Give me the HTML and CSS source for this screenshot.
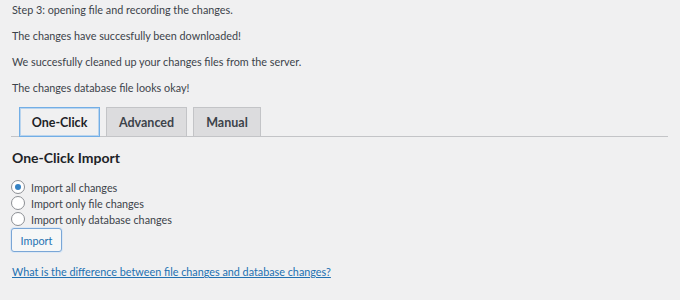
FILE: index.html
```html
<!DOCTYPE html>
<html lang="en">
<head>
    <meta charset="UTF-8">
    <title>Import changes</title>
    <link rel="stylesheet" href="styles.css">
</head>
<body>

<div class="wrap">
    <p>Step 3: opening file and recording the changes.</p>
    <p>The changes have succesfully been downloaded!</p>
    <p>We succesfully cleaned up your changes files from the server.</p>
    <p>The changes database file looks okay!</p>

    <div class="nav-tab-wrapper">
        <a class="nav-tab nav-tab-active" href="#">One-Click</a>
        <a class="nav-tab" href="#">Advanced</a>
        <a class="nav-tab" href="#">Manual</a>
    </div>

    <h2>One-Click Import</h2>

    <form class="import-form">
        <label class="radio-row"><input type="radio" name="mode" checked> Import all changes</label>
        <label class="radio-row"><input type="radio" name="mode"> Import only file changes</label>
        <label class="radio-row"><input type="radio" name="mode"> Import only database changes</label>
        <button type="button" class="button">Import</button>
    </form>

    <a class="help-link" href="#">What is the difference between file changes and database changes?</a>
</div>

</body>
</html>
```

FILE: styles.css
```css
body {
    margin: 0;
    background: #f0f0f1;
    color: #3c434a;
    font-family: Lato, "Liberation Sans", sans-serif;
    font-size: 10.8px;
}

.wrap {
    padding: 1px 12px 0 11px;
}

p {
    margin: 0 0 8px 1px;
    line-height: 18px;
}

.nav-tab-wrapper {
    display: flex;
    gap: 6px;
    margin-top: 10px;
    padding-left: 8px;
    border-bottom: 1px solid #c3c4c7;
    height: 29px;
}

.nav-tab {
    display: flex;
    align-items: center;
    justify-content: center;
    height: 29px;
    box-sizing: border-box;
    padding: 0 4px;
    background: #dcdcde;
    border: 1px solid #c3c4c7;
    border-bottom: none;
    color: #3c434a;
    font-size: 12.5px;
    font-weight: 700;
    white-space: nowrap;
    text-decoration: none;
}

.nav-tab:nth-child(1),
.nav-tab:nth-child(2) {
    width: 81px;
}

.nav-tab:nth-child(3) {
    width: 68px;
}

.nav-tab-active {
    background: #f0f0f1;
    height: 30px;
    border: 1px solid #72aee6;
    box-shadow: inset 0 0 0 1px #b9d4ee;
    color: #1d2327;
}

h2 {
    margin: 10px 0 10px 1px;
    font-size: 14px;
    font-weight: 700;
    line-height: 22px;
    color: #1d2327;
}

.import-form {
    display: flex;
    flex-direction: column;
    align-items: flex-start;
}

.radio-row {
    display: flex;
    align-items: center;
    height: 16px;
    gap: 6px;
}

.radio-row input {
    appearance: none;
    display: flex;
    align-items: center;
    justify-content: center;
    margin: 0;
    width: 14px;
    height: 14px;
    box-sizing: border-box;
    border: 1px solid #8c8f94;
    border-radius: 50%;
    background: #fff;
}

.radio-row input:checked::before {
    content: "";
    width: 6px;
    height: 6px;
    border-radius: 50%;
    background: #3582c4;
}

.button {
    margin-top: 1px;
    width: 51px;
    height: 24px;
    padding: 0;
    background: #f6f7f7;
    border: 1px solid #7aa6d6;
    border-radius: 3px;
    box-shadow: 0 0 0 1px #dce8f5;
    color: #2271b1;
    font-family: inherit;
    font-size: 10.8px;
}

.help-link {
    display: block;
    margin: 11px 0 0 1px;
    line-height: 18px;
    color: #2271b1;
}
```
